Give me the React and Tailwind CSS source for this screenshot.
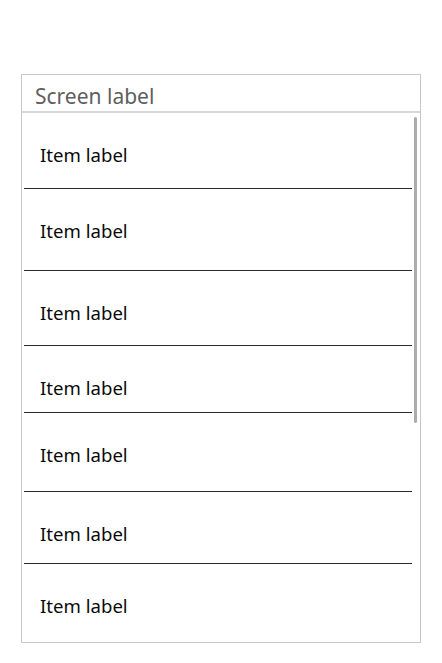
export default function App() {
  const heights = [76, 82, 75, 67, 79, 72, 78];
  return (
    <div className="w-[442px] h-[663px] bg-white" style={{ fontFamily: '"Noto Sans", sans-serif' }}>
      <div className="h-[74px]" />
      <div className="ml-[21px] w-[400px] h-[569px] border border-[#c8c8c8] flex flex-col">
        <div className="h-[38px] border-b-2 border-[#d8d8d8] pl-[13px] pt-[8px] text-[21px] leading-[26px] text-[#5e5e5e]">
          Screen label
        </div>
        <div className="relative flex-1 pl-[2px] pr-[8px]">
          {heights.map((h, i) => (
            <div
              key={i}
              className={`pl-[16px] pt-[30px] text-[18.6px] leading-[24px] text-[#0a0a0a] ${i < heights.length - 1 ? 'border-b border-[#2a2a2a]' : ''}`}
              style={{ height: h }}
            >
              Item label
            </div>
          ))}
          <div className="absolute right-[3px] top-[4px] w-[3px] h-[306px] bg-[#acacac] rounded-sm" />
        </div>
      </div>
    </div>
  );
}
